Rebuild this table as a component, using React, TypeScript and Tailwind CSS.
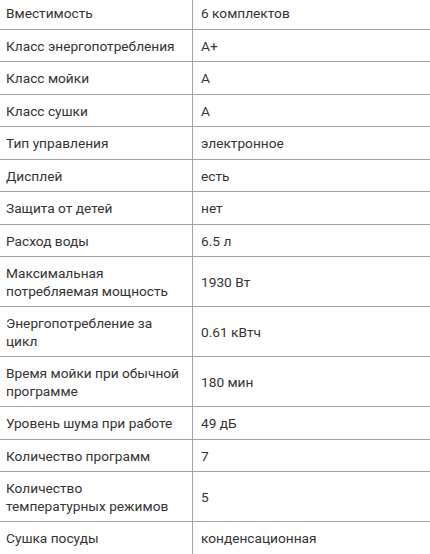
const specs: [string, string][] = [
  ['Вместимость', '6 комплектов'],
  ['Класс энергопотребления', 'A+'],
  ['Класс мойки', 'A'],
  ['Класс сушки', 'A'],
  ['Тип управления', 'электронное'],
  ['Дисплей', 'есть'],
  ['Защита от детей', 'нет'],
  ['Расход воды', '6.5 л'],
  ['Максимальная потребляемая мощность', '1930 Вт'],
  ['Энергопотребление за цикл', '0.61 кВтч'],
  ['Время мойки при обычной программе', '180 мин'],
  ['Уровень шума при работе', '49 дБ'],
  ['Количество программ', '7'],
  ['Количество температурных режимов', '5'],
  ['Сушка посуды', 'конденсационная'],
]

export default function App() {
  return (
    <div className="w-[430px] h-[554px] overflow-hidden bg-white font-['Roboto',sans-serif] text-[13.7px] leading-[17.5px] text-[#333]">
      <div className="-mt-[3px]">
        {specs.map(([name, value]) => (
          <div key={name} className="flex border-b border-[#a3a3a3]">
            <div className="w-[193px] shrink-0 border-r border-[#a3a3a3] pt-[8px] pb-[6px] pl-[6px] pr-2 flex items-center">
              {name}
            </div>
            <div className="flex-1 pt-[8px] pb-[6px] pl-[8px] pr-2 flex items-center">{value}</div>
          </div>
        ))}
      </div>
    </div>
  )
}
